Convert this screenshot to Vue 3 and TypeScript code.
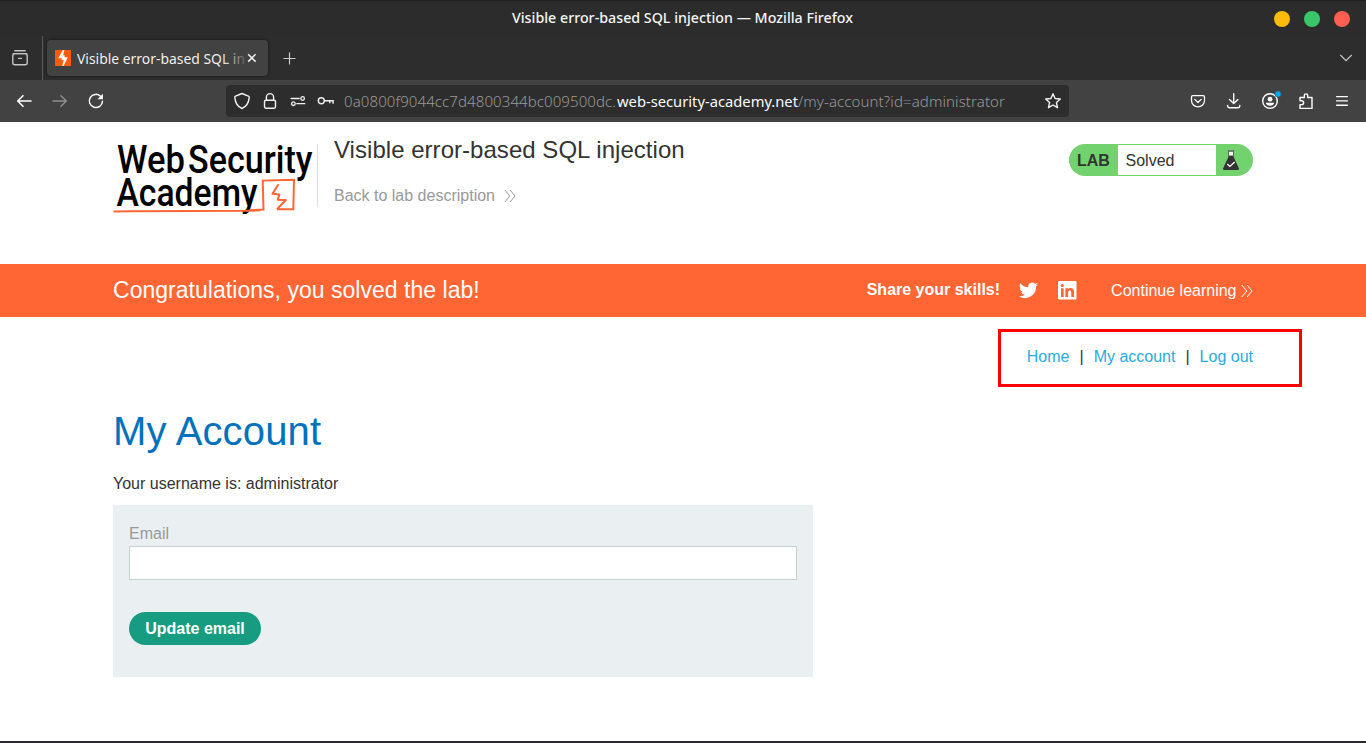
<script setup lang="ts">
interface NavLink { label: string; href: string }

const pageTitle = 'Visible error-based SQL injection'
const username = 'administrator'
const links: NavLink[] = [
  { label: 'Home', href: '#home' },
  { label: 'My account', href: '#account' },
  { label: 'Log out', href: '#logout' },
]
</script>

<template>
  <div class="window">
    <header class="titlebar">
      <svg class="caption" width="342" height="24" viewBox="0 0 342 24">
        <text x="0" y="16" textLength="341" lengthAdjust="spacingAndGlyphs">{{ pageTitle }} — Mozilla Firefox</text>
      </svg>
      <div class="controls"><i class="min"></i><i class="max"></i><i class="close"></i></div>
    </header>

    <div class="tabs">
      <div class="view">
        <svg width="18" height="18" viewBox="0 0 18 18" fill="none" stroke="#c4c4c4" stroke-width="1.4" stroke-linecap="round">
          <path d="M3.8 1.8h10.4M2.3 4.6h13.4" /><path d="M1.8 6.8Q1.8 4.6 3.8 4.6h10.4q2 0 2 2.2v7q0 2-2 2H3.8q-2 0-2-2z" /><path d="M7.6 9.4h2.8" />
        </svg>
      </div>
      <div class="tab">
        <svg width="16" height="16" viewBox="0 0 16 16">
          <rect width="16" height="16" fill="#ff5c0a" />
          <path d="M7.8 0h1.6L8.1 5.2h1.5v2h3.2L8.6 16H7.2l1.4-5.9H6.7V8.300H3.300z" fill="#fff" />
        </svg>
        <svg class="tab-title" width="169" height="24" viewBox="0 0 169 24">
          <defs><linearGradient id="tabFade" gradientUnits="userSpaceOnUse" x1="130" x2="172"><stop offset="0.35" stop-color="#f2f2f2" /><stop offset="1" stop-color="#424242" /></linearGradient></defs>
          <text x="0" y="18" fill="url(#tabFade)" textLength="168" lengthAdjust="spacingAndGlyphs">Visible error-based SQL in</text>
        </svg>
        <svg class="tab-close" width="10" height="10" viewBox="0 0 10 10"><path d="M1.2 1.2l7.4 7.4M8.6 1.2L1.2 8.6" fill="none" stroke="#f4f4f4" stroke-width="1.5" /></svg>
      </div>
      <svg class="plus" width="14" height="14" viewBox="0 0 14 14"><path d="M6.500 .500v12M.500 6.500h12" stroke="#ccc" stroke-width="1.2" /></svg>
      <svg class="chevron" width="14" height="10" viewBox="0 0 14 10"><path d="M1.3 2L7 7.6 12.7 2" fill="none" stroke="#c4c4c4" stroke-width="1.3" /></svg>
    </div>

    <div class="toolbar">
      <div class="history">
        <svg width="18" height="18" viewBox="0 0 18 18"><path d="M16 9H2.7M8 3.7L2.7 9 8 14.3" fill="none" stroke="#fff" stroke-width="1.6" stroke-linecap="round" stroke-linejoin="round" /></svg>
        <svg width="18" height="18" viewBox="0 0 18 18"><path d="M2 9h13.3M10 3.7L15.3 9 10 14.3" fill="none" stroke="#8e8e8e" stroke-width="1.5" stroke-linecap="round" stroke-linejoin="round" /></svg>
        <svg width="18" height="18" viewBox="0 0 18 18"><path d="M15.5 9.2A6.6 6.6 0 1 1 13.6 4.3" fill="none" stroke="#fff" stroke-width="1.5" stroke-linecap="round" /><path d="M15.9 1.8v5.4h-5.4z" fill="#fff" /></svg>
      </div>
      <div class="address">
        <svg width="18" height="18" viewBox="0 0 18 18" fill="none" stroke="#f2f2f2" stroke-width="1.4" stroke-linejoin="round"><path d="M9 1.5L2.6 4.1q-1 .4-.8 1.5C2.3 10.6 4.4 14.5 9 16.5c4.6-2 6.7-5.9 7.2-10.9q.1-1.1-.8-1.5z" /></svg>
        <svg width="18" height="18" viewBox="0 0 18 18" fill="none" stroke="#f2f2f2" stroke-width="1.4"><rect x="3.5" y="8.2" width="11" height="8" rx="1.4" /><path d="M5.4 8V5.2a3.6 3.6 0 0 1 7.2 0V8" /></svg>
        <svg width="18" height="18" viewBox="0 0 18 18" fill="none" stroke="#f2f2f2" stroke-width="1.3"><path d="M2.2 6.5h8M7.800 11.700h8" stroke-linecap="round" /><circle cx="13.6" cy="6.5" r="1.800" /><circle cx="4.4" cy="11.7" r="1.800" /></svg>
        <svg width="18" height="18" viewBox="0 0 18 18" fill="none" stroke="#f2f2f2" stroke-width="1.4"><circle cx="4.3" cy="8.8" r="3" /><path d="M7.3 8.8h8.8v3M12.8 8.8v2.4" /></svg>
        <svg class="url" width="662" height="24" viewBox="0 0 662 24">
          <text x="0" y="18" textLength="272" fill="#999">0a0800f9044cc7d4800344bc009500dc.</text>
          <text x="273" y="18" textLength="181" class="host" fill="#fbfbfe" lengthAdjust="spacingAndGlyphs">web-security-academy.net</text>
          <text x="454" y="18" textLength="207" fill="#999">/my-account?id=administrator</text>
        </svg>
        <svg class="star" width="18" height="18" viewBox="0 0 18 18"><path d="M9 1.7l2.1 4.8 5.2.5-3.9 3.5 1.1 5.2L9 13l-4.5 2.7 1.1-5.2L1.7 7l5.2-.5z" fill="none" stroke="#f2f2f2" stroke-width="1.4" stroke-linejoin="round" /></svg>
      </div>
      <div class="actions">
        <svg width="18" height="18" viewBox="0 0 18 18" fill="none" stroke="#fff" stroke-width="1.3" stroke-linecap="round" stroke-linejoin="round"><path d="M3.8 3.6h10.4q1.300 0 1.300 1.400v3.400a6.500 6.500 0 0 1-13 0V5q0-1.400 1.300-1.400z" /><path d="M5.8 7.4L9 10.5l3.2-3.1" /></svg>
        <svg width="18" height="18" viewBox="0 0 18 18" fill="none" stroke="#fff" stroke-width="1.4" stroke-linecap="round" stroke-linejoin="round"><path d="M8.700 1.8v9.6M4.5 7.4l4.2 4.2 4.2-4.2M2.6 13.4v.6q0 1.700 1.700 1.700h8.800q1.700 0 1.700-1.700v-.6" /></svg>
        <svg width="22" height="22" viewBox="0 0 22 22"><circle cx="11" cy="11" r="7.3" fill="none" stroke="#fff" stroke-width="1.4" /><circle cx="11" cy="9.2" r="2.4" fill="#fff" /><path d="M6.8 12.8h8.4q-.6 3-4.2 3t-4.2-3z" fill="#fff" /><circle cx="19" cy="4.1" r="3" fill="#00a8f5" stroke="#2b6787" stroke-width=".8" /></svg>
        <svg width="18" height="18" viewBox="0 0 18 18" fill="none" stroke="#fff" stroke-width="1.4" stroke-linejoin="round"><path d="M3 8.800V5.500h4.300V3.600a1.700 1.700 0 0 1 3.400 0v1.900H15v10.900H3v-3.800h1.700a1.900 1.900 0 0 0 0-3.800z" /></svg>
        <svg width="18" height="18" viewBox="0 0 18 18"><path d="M3.6 4.6h10.8M3.6 8.9h10.8M3.6 13.2h10.8" stroke="#fff" stroke-width="1.4" stroke-linecap="round" /></svg>
      </div>
    </div>

    <main>
      <section class="lab-header">
        <svg class="logo" width="205" height="84" viewBox="0 0 205 84">
          <g font-family="Roboto, sans-serif" font-size="38" font-weight="500" fill="#000">
            <text x="4" y="41.600" textLength="68" lengthAdjust="spacingAndGlyphs">Web</text>
            <text x="75" y="41.600" textLength="124.500" lengthAdjust="spacingAndGlyphs">Security</text>
            <text x="3.5" y="74.600" textLength="141" lengthAdjust="spacingAndGlyphs">Academy</text>
          </g>
          <path d="M.5 80.6Q12 80.2 20 80.2L132 79.8 147 79.3" fill="none" stroke="#ff6633" stroke-width="2" />
          <path d="M137 79.3L150.5 78.6 149.7 49.6 181 48.8 180.3 78.3 164 78.200" fill="none" stroke="#ff6633" stroke-width="2" />
          <path d="M165.500 53.200L159.500 62.800l6.800.8-1.500 5.200 8 .2-8.800 9.200" fill="none" stroke="#ff6633" stroke-width="2" stroke-linejoin="round" />
        </svg>
        <div class="lab-title">
          <h2>{{ pageTitle }}</h2>
          <a href="#description">Back to lab description
            <svg width="12" height="14" viewBox="0 0 12 14"><path d="M.8 1l5 6-5 6M6 1l5 6-5 6" fill="none" stroke="#999" stroke-width="1" /></svg>
          </a>
        </div>
        <div class="status">
          <strong>LAB</strong><span>Solved</span>
          <svg width="16" height="20" viewBox="0 0 16 20"><path d="M5.4 1v6L0 18.6Q-.2 20 1 20h14q1.2 0 1-1.4L10.6 7V1z" fill="#333" /><path d="M6 1.6h4V5.6H6z" fill="#f5fff5" /><path d="M4.6.6h6.8" stroke="#687568" /><path d="M4.3 14l2.6 2.4 4.8-4.5" fill="none" stroke="#fff" stroke-width="1.4" /></svg>
        </div>
      </section>

      <section class="banner">
        <p class="congrats">Congratulations, you solved the lab!</p>
        <strong>Share your skills!</strong>
        <svg class="twitter" width="19" height="17" viewBox="0 0 24 20"><path fill="#fff" d="M24 2.4a10 10 0 0 1-2.8.8A5 5 0 0 0 23.3.4a10 10 0 0 1-3.1 1.2A4.9 4.9 0 0 0 11.8 6C7.700 5.900 4 3.900 1.700.9a4.900 4.900 0 0 0 1.500 6.600A5 5 0 0 1 1 6.900c0 2.400 1.700 4.400 3.900 4.900a5 5 0 0 1-2.200.1 4.900 4.900 0 0 0 4.600 3.400A10 10 0 0 1 0 17.300 14 14 0 0 0 21.500 4.900 10 10 0 0 0 24 2.400z" /></svg>
        <svg class="linkedin" width="19" height="19" viewBox="0 0 19 19"><rect width="18.500" height="18.500" rx="1.2" fill="#fff" /><circle cx="4.3" cy="4.5" r="1.6" fill="#ff6633" /><path d="M3 7.300h2.700v8.700H3zM7.400 7.300h2.500v1.200q.8-1.400 2.600-1.400 3.500 0 3.500 4V16h-2.700v-4.400q0-2.200-1.500-2.200-1.700 0-1.700 2.200V16H7.400z" fill="#ff6633" /></svg>
        <a href="#continue">Continue learning<svg width="12" height="14" viewBox="0 0 12 14"><path d="M.8 1l5 6-5 6M6 1l5 6-5 6" fill="none" stroke="#fff" stroke-width="1" /></svg></a>
      </section>

      <nav>
        <template v-for="(link, i) in links" :key="link.label">
          <span v-if="i">|</span><a :href="link.href">{{ link.label }}</a>
        </template>
      </nav>

      <section class="account">
        <h1>My Account</h1>
        <p>Your username is: {{ username }}</p>
        <form @submit.prevent>
          <label for="email">Email</label>
          <input id="email" type="email" />
          <button type="submit">Update email</button>
        </form>
      </section>
    </main>
    <div class="edge"></div>
  </div>
</template>

<style>
body { margin: 0; overflow: hidden; background: #fff; }
</style>

<style scoped>
* { box-sizing: border-box; }
svg { display: block; flex: none; overflow: visible; }
a { text-decoration: none; }
.window { width: 1366px; height: 743px; display: flex; flex-direction: column; overflow: hidden; font: 16px/20px "Liberation Sans", Arial, sans-serif; color: #333; }
.titlebar, .tabs, .toolbar { flex: none; display: flex; align-items: center; font-family: "Noto Sans", sans-serif; }
.titlebar { height: 36px; background: #2c2c2c; border-top: 1px solid #202020; justify-content: flex-end; }
.caption { margin: 0 420px 0 0; font-size: 14.5px; font-weight: 500; }
.caption text { fill: #f5f5f5; }
.controls { display: flex; gap: 14px; margin-right: 16px; }
.controls i { width: 16px; height: 16px; border-radius: 50%; }
.min { background: #ffbd0a; }
.max { background: #38c768; }
.close { background: #ff5f50; }
.tabs { height: 44px; background: #2d2d2d; }
.view { width: 43px; height: 44px; border-right: 1px solid #5a5a5a; display: flex; align-items: center; padding-left: 11px; }
.tab { width: 221px; height: 36px; margin-left: 4px; background: #424242; border-radius: 4px; box-shadow: 0 0 3px #111; display: flex; align-items: center; padding-left: 8px; font-size: 15px; }
.tab-title { margin-left: 6px; }
.tab-close { margin-left: 1px; }
.plus { margin: 2px 0 0 15px; }
.chevron { margin: 0 13px 0 auto; }
.toolbar { height: 42px; background: #424242; }
.history { display: flex; gap: 18px; margin-left: 15px; }
.address { width: 843px; height: 32px; margin-left: 121px; border-radius: 4px; background: #2d2d2d; display: flex; align-items: center; gap: 10px; padding-left: 7px; }
.url { margin-left: -1px; font-size: 15px; font-weight: 300; }
.host { font-weight: 400; }
.star { margin-left: 28px; }
.actions { display: flex; align-items: center; gap: 18px; margin-left: 120px; }
.actions svg:nth-child(3) { margin: 0 -2px; }
main { flex: 1; background: #fff; }
.lab-header { height: 142px; padding: 0 113px; display: flex; align-items: flex-start; }
.logo { margin: 9px -1px 0 0; }
.lab-title { height: 63px; margin-top: 22px; border-left: 1px solid #dedede; padding-left: 16px; }
h2 { font-size: 24px; line-height: 28px; font-weight: 400; letter-spacing: .035px; margin: -8px 0 22px; }
.lab-title a { display: flex; align-items: center; gap: 9px; color: #999; line-height: 19px; }
.status { width: 184px; height: 32px; margin: 22px 0 0 auto; border-radius: 16px; background: #72d36e; display: flex; align-items: center; }
.status strong { width: 49px; padding: 2px 0 0 8px; }
.status span { width: 98px; height: 30px; padding-left: 7.500px; line-height: 31px; background: #fff; }
.status svg { margin-left: 7px; }
.banner { height: 53px; padding: 0 113px; background: #ff6633; color: #fff; display: flex; align-items: center; }
.congrats { margin: -2px auto 0 0; font-size: 23px; line-height: 26px; letter-spacing: .03px; }
.banner strong { margin-top: -2px; }
.twitter { margin-left: 19px; }
.linkedin { margin-left: 20px; }
.banner a { color: #fff; display: flex; align-items: center; gap: 4.500px; margin-left: 34px; }
nav { width: 304px; height: 58px; margin: 12px 0 0 997.500px; border: 3px solid #f00; display: flex; align-items: center; justify-content: flex-end; gap: 10px; padding: 0 45.500px 3px 0; }
nav a { color: #29abe2; }
.account { width: 700px; margin: 23px 0 0 113px; }
h1 { margin: 0; font-size: 40px; line-height: 42px; font-weight: 400; letter-spacing: .14px; color: #0071bc; }
.account p { margin: 22px 0 11px; }
form { height: 172px; background: #eaeff2; padding: 18px 16px; }
label { display: block; height: 23px; line-height: 22px; color: #999; }
input { display: block; width: 668px; height: 34px; border: 1px solid #c5d0d0; background: #fff; padding: 4px 8px; }
button { display: block; width: 132px; height: 33px; margin-top: 32px; padding: 0; border: 0; border-radius: 17px; background: #169c80; color: #fff; font: bold 16px "Liberation Sans", Arial, sans-serif; }
.edge { height: 2px; flex: none; background: #2a2a2d; }
</style>
